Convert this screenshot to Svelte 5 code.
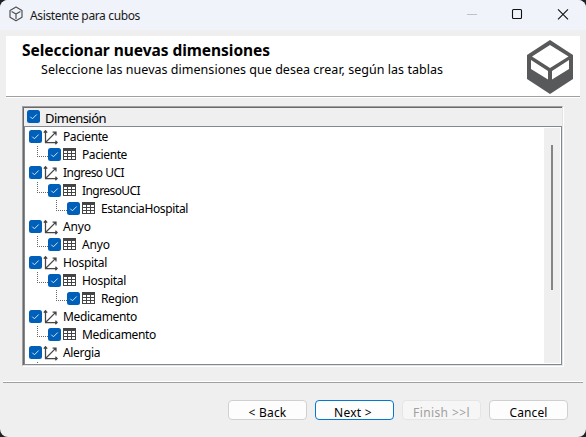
<script>
  const rows = [
    { level: 0, text: 'Paciente', w: 45 },
    { level: 1, text: 'Paciente', w: 45 },
    { level: 0, text: 'Ingreso UCI', w: 61 },
    { level: 1, text: 'IngresoUCI', w: 58 },
    { level: 2, text: 'EstanciaHospital', w: 87 },
    { level: 0, text: 'Anyo', w: 28 },
    { level: 1, text: 'Anyo', w: 28 },
    { level: 0, text: 'Hospital', w: 44 },
    { level: 1, text: 'Hospital', w: 44 },
    { level: 2, text: 'Region', w: 37 },
    { level: 0, text: 'Medicamento', w: 74 },
    { level: 1, text: 'Medicamento', w: 74 },
    { level: 0, text: 'Alergia', w: 37 },
    { level: 1, text: '', w: 0 }
  ];

  // Spreads the difference between natural and wanted width over the letters.
  function fit(node, width) {
    const n = node.textContent.length;
    if (!width || !n) return;
    const natural = node.getBoundingClientRect().width;
    node.style.letterSpacing = (width - natural) / n + 'px';
  }
</script>

{#snippet check()}
  <svg class="check" width="13" height="13" viewBox="0 0 13 13">
    <rect width="13" height="13" rx="2.5" fill="#005fb8" />
    <path d="M3.3 6.7 5.4 8.8 9.7 4.5" fill="none" stroke="#d5e6f5" stroke-width="1" />
  </svg>
{/snippet}

<div class="window">
  <header class="titlebar">
    <svg width="14" height="16" viewBox="0 0 14 16" fill="none" stroke="#505153" stroke-width="1.2" stroke-linejoin="round">
      <path d="M7 1 13 4.4V11.3L7 14.8 1 11.3V4.4ZM2.6 5.4 7 8.1 11.4 5.4M7 8.1V13" />
    </svg>
    <span class="caption" use:fit={110}>Asistente para cubos</span>
    <svg class="controls" width="110" height="14" viewBox="0 0 110 14" fill="none">
      <path d="M3 7.5H13" stroke="#bfc1c6" />
      <rect x="48.5" y="2.5" width="9" height="9" rx="1" stroke="#111" stroke-width="1.1" />
      <path d="M94 2.3 104 12.3M104 2.3 94 12.3" stroke="#111" stroke-width="1.1" />
    </svg>
  </header>

  <section class="banner">
    <div class="words">
      <h1><span use:fit={248}>Seleccionar nuevas dimensiones</span></h1>
      <p><span use:fit={402}>Seleccione las nuevas dimensiones que desea crear, según las tablas</span></p>
    </div>
    <svg class="logo" width="46" height="54" viewBox="0 0 46 54">
      <path d="M23 0 46 15V39L23 54 0 39V15Z" fill="#58595b" />
      <path d="M23 5 41.5 16.5 23 28 5 16.5ZM4 20 21 31V39.5L4 29ZM42 20 25 31V39.5L42 29Z" fill="#fff" />
    </svg>
  </section>

  <section class="list">
    <div class="head">{@render check()}<span use:fit={61}>Dimensión</span></div>
    <div class="tree">
      <div class="rows">
        {#each rows as row}
          <div class="row">
            {#if row.level > 0}
              <svg class="branch" width={row.level * 19} height="18" viewBox="0 0 {row.level * 19} 18">
                <path d="M{row.level * 19 - 10.5} 0V11" stroke="#666" stroke-dasharray="1 1" />
                <path d="M{row.level * 19 - 9} 10.5H{row.level * 19}" stroke="#666" stroke-dasharray="1 1" />
              </svg>
            {/if}
            {#if row.text}
              {@render check()}
              {#if row.level === 0}
                <svg class="icon" width="15" height="16" viewBox="0 0 15 16" fill="none" stroke="#454545" stroke-width="1.25">
                  <path d="M2.5 1.6V13.5H14M.8 3.6 2.5 1.6 4.2 3.6M12.4 11.7 14.2 13.5 12.4 15.3M2.8 13.2 12.6 3.4M9.6 3H13V6.4" />
                </svg>
              {:else}
                <svg class="icon" width="15" height="15" viewBox="0 0 15 15" shape-rendering="crispEdges">
                  <path d="M1 1H14V13H1Z" fill="#444" />
                  <path d="M2 4h3v2h-3zM6 4h3v2h-3zM10 4h3v2h-3zM2 7h3v2h-3zM6 7h3v2h-3zM10 7h3v2h-3zM2 10h3v2h-3zM6 10h3v2h-3zM10 10h3v2h-3z" fill="#fff" />
                </svg>
              {/if}
              <span class="label" use:fit={row.w}>{row.text}</span>
            {/if}
          </div>
        {/each}
      </div>
      <div class="track"><div class="thumb"></div></div>
    </div>
  </section>

  <footer>
    <button><span use:fit={38}>&lt; Back</span></button>
    <button class="primary"><span use:fit={38}>Next &gt;</span></button>
    <button class="off" disabled><span use:fit={57}>Finish &gt;&gt;l</span></button>
    <button><span use:fit={38}>Cancel</span></button>
  </footer>
</div>

<style>
  :global(body) { background: #202124; }
  .window {
    box-sizing: border-box;
    width: 586px;
    height: 437px;
    display: flex;
    flex-direction: column;
    overflow: hidden;
    background: #efefef;
    border-radius: 8px;
    font: 12px/18px "Noto Sans", "Open Sans", sans-serif;
    color: #000;
  }
  span { white-space: pre; }
  svg { display: block; flex: none; }
  .titlebar {
    height: 30px;
    flex: none;
    display: flex;
    align-items: flex-start;
    box-sizing: border-box;
    padding: 6px 22px 0 9px;
    background: #f0f3f9;
  }
  .caption { margin-left: 7px; font-size: 12px; line-height: 19px; color: #191919; }
  .controls { margin: 1px -10px 0 auto; }
  .banner {
    height: 60px;
    flex: none;
    margin: 6px 6px 0;
    display: flex;
    justify-content: space-between;
    background: #fff;
    border-bottom: 1px solid #a0a0a0;
    box-shadow: 0 1px #fff;
  }
  .words { padding: 4px 0 0 16px; }
  h1 { margin: 0; font-size: 15.5px; line-height: 20px; font-weight: 700; }
  p { margin: 1px 0 0 19px; line-height: 18px; font-size: 12.5px; }
  .logo { margin: 4px 7px 0 0; }
  .list {
    box-sizing: border-box;
    width: 541px;
    height: 260px;
    flex: none;
    margin: 9px 0 0 22px;
    border: 1px solid;
    border-color: #a0a0a0 #e3e3e3 #e3e3e3 #a0a0a0;
    box-shadow: 1px 1px #fff, inset 1px 1px #696969;
    padding: 1px 0 0 1px;
  }
  .head { height: 18px; display: flex; font-size: 13px; line-height: 20px; }
  .head .check { margin: 2px 5px 0 3px; }
  .tree {
    box-sizing: border-box;
    height: 239px;
    display: flex;
    border: 1px solid #828790;
    background: #fff;
    padding: 1px;
  }
  .rows { flex: 1; overflow: hidden; padding-left: 3px; }
  .row { height: 18px; display: flex; }
  .row .check { margin-top: 2px; }
  .icon { margin: 1px 0 0 1px; }
  .label { margin-left: 5px; line-height: 17px; }
  .track { width: 16px; background: #efefef; }
  .thumb { width: 2px; height: 145px; margin: 17px 0 0 7px; background: #858585; }
  footer {
    margin: 16px 3px 0;
    padding: 17px 15px 0 0;
    display: flex;
    justify-content: flex-end;
    gap: 8px;
    border-top: 1px solid #a0a0a0;
    box-shadow: 0 -1px #fff;
  }
  button {
    box-sizing: border-box;
    width: 79px;
    height: 20px;
    padding: 3px 0 0;
    border: 1px solid #d0d0d0;
    border-radius: 4px;
    background: #fdfdfd;
    color: #000;
    font: inherit;
    line-height: 17px;
    display: flex;
    justify-content: center;
    overflow: hidden;
  }
  .primary { border-color: #0078d4; padding-right: 3px; }
  .off { border-color: #e5e5e5; background: #f6f6f6; color: #a0a0a0; }
</style>
